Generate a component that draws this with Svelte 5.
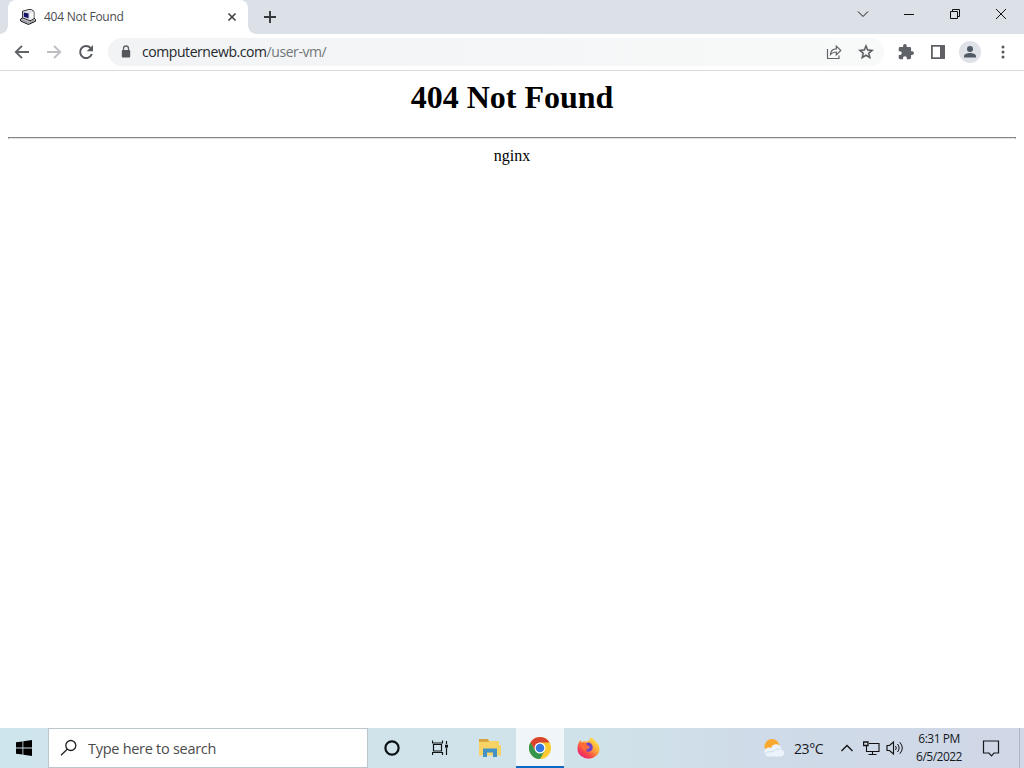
<script>
  const tabTitle = '404 Not Found';
  const host = 'computernewb.com';
  const path = '/user-vm/';
  const time = '6:31 PM';
  const date = '6/5/2022';
</script>

<div class="screen">
  <header class="tabstrip">
    <div class="tab">
      <svg class="favicon" width="16" height="16" viewBox="0 0 16 16">
        <path d="M.6 10 3 8.500l7.500 2.500 3.500-2 1.500 1.500v1.700L8.500 15.500.6 12z" fill="#c4c3cb" stroke="#111" />
        <path d="m2.500 11.200 6 2.500 5.500-2.500" fill="none" stroke="#555" stroke-dasharray="1 1" />
        <path d="M2.500 2.200 8.500.5h3l2.500 2v7l-4 2.300-7.500-3z" fill="#dddce3" stroke="#222" stroke-width=".9" />
        <path d="m9.800 4.200 3.800-1.400v6.500l-3.800 1.900z" fill="#f8f7fa" />
        <path d="m3.800 3.600 4.700 1v4.600L3.800 7.700z" fill="#12126a" />
      </svg>
      <span class="tab-title">{tabTitle}</span>
      <svg class="tab-close" width="16" height="16" viewBox="0 0 16 16">
        <path d="m4.500 4.500 7 7m0-7-7 7" stroke="#3c4043" stroke-width="1.6" />
      </svg>
    </div>
    <svg class="new-tab" width="16" height="16" viewBox="0 0 16 16">
      <path d="M8 2v12M2 8h12" stroke="#34373b" stroke-width="1.9" />
    </svg>
    <div class="window-buttons">
      <svg width="46" height="28" viewBox="0 0 46 28"><path d="m18 11.500 5 5 5-5" /></svg>
      <svg width="46" height="28" viewBox="0 0 46 28"><path d="M18 14.500h10" /></svg>
      <svg width="46" height="28" viewBox="0 0 46 28">
        <path d="M18.500 11.500h7v7h-7zM20.500 11V9.500h7v7H26" />
      </svg>
      <svg width="46" height="28" viewBox="0 0 46 28"><path d="m18 9 10 10m0-10L18 19" /></svg>
    </div>
  </header>

  <div class="toolbar">
    <svg class="nav" width="20" height="20" viewBox="0 0 20 20">
      <path d="M17 10H4m6-6.200L3.800 10l6.200 6.200" fill="none" stroke="#5f6368" stroke-width="1.9" />
    </svg>
    <svg class="nav" width="20" height="20" viewBox="0 0 20 20">
      <path d="M3 10h13m-6-6.200 6.200 6.200-6.200 6.200" fill="none" stroke="#bcbec1" stroke-width="1.9" />
    </svg>
    <svg class="nav" width="20" height="20" viewBox="0 0 20 20">
      <path d="M15.800 12A6 6 0 1 1 14.500 5.900" fill="none" stroke="#56595d" stroke-width="2" />
      <path d="M17 3v6.300h-6.300z" fill="#56595d" />
    </svg>
    <div class="omnibox">
      <svg class="lock" width="10" height="14" viewBox="0 0 10 14">
        <path d="M2.500 6V3.500a2.500 2.500 0 0 1 5 0V6" fill="none" stroke="#5f6368" stroke-width="1.300" />
        <rect x=".8" y="5" width="8.400" height="7.500" rx="1" fill="#54585c" />
      </svg>
      <span class="url">{host}<span class="path">{path}</span></span>
      <svg class="share" width="18" height="18" viewBox="0 0 18 18">
        <path
          d="M2.500 6v9.500h11.500V12.500M5.500 11.500c.3-3.500 2.500-5.500 5.800-5.600V3.200l4.500 4.300-4.500 4.300V9c-2.500 0-4.300.7-5.800 2.500z"
          fill="none" stroke="#5f6368" stroke-width="1.150"
        />
      </svg>
      <svg class="star" width="18" height="18" viewBox="0 0 24 24">
        <path
          d="m22 9.240-7.190-.62L12 2 9.190 8.630 2 9.240l5.460 4.730L5.820 21 12 17.270 18.180 21l-1.630-7.030zM12 15.400l-3.760 2.270 1-4.280-3.320-2.880 4.380-.38L12 6.100l1.710 4.040 4.380.38-3.320 2.880 1 4.280z"
          fill="#54585c" stroke="#54585c" stroke-width=".5"
        />
      </svg>
    </div>
    <svg class="puzzle" width="16" height="16" viewBox="1 1 22 22">
      <path
        d="M20.500 11H19V7a2 2 0 0 0-2-2h-4V3.500a2.500 2.500 0 0 0-5 0V5H4a2 2 0 0 0-2 2v3.800h1.500a2.700 2.700 0 0 1 0 5.400H2V20a2 2 0 0 0 2 2h3.800v-1.500a2.700 2.700 0 0 1 5.400 0V22H17a2 2 0 0 0 2-2v-4h1.500a2.500 2.500 0 0 0 0-5z"
        fill="#5f6368"
      />
    </svg>
    <svg class="panel" width="14" height="14" viewBox="0 0 14 14">
      <path d="M0 0h14v14H0zM1.800 1.800v10.400H9V1.800z" fill="#5f6165" fill-rule="evenodd" />
    </svg>
    <svg class="profile" width="22" height="22" viewBox="0 0 22 22">
      <circle cx="11" cy="11" r="11" fill="#dfe2e7" />
      <circle cx="11" cy="8" r="3" fill="#505a67" />
      <path d="M5 16.500v-1.300c0-2 3.500-3.200 6-3.200s6 1.200 6 3.200v1.300z" fill="#505a67" />
    </svg>
    <svg class="menu" width="4" height="14" viewBox="0 0 4 14">
      <circle cx="2" cy="2" r="1.500" />
      <circle cx="2" cy="7" r="1.500" />
      <circle cx="2" cy="12" r="1.500" />
    </svg>
  </div>

  <main>
    <h1>404 Not Found</h1>
    <hr />
    <p>nginx</p>
  </main>

  <footer class="taskbar">
    <div class="start">
      <svg width="16" height="16" viewBox="0 0 16 16">
        <path d="M0 2.300 6.500 1.400v6.200H0zM7.300 1.300 16 0v7.600H7.300zM0 8.400h6.500v6.200L0 13.700zM7.300 8.400H16V16l-8.700-1.300z" />
      </svg>
    </div>
    <div class="search">
      <svg width="18" height="18" viewBox="0 0 18 18">
        <circle cx="10.800" cy="6.500" r="5" fill="none" stroke="#222" stroke-width="1.300" />
        <path d="m7.200 10.200-6.200 6" stroke="#222" stroke-width="1.300" />
      </svg>
      <span>Type here to search</span>
    </div>
    <div class="app">
      <svg width="16" height="16" viewBox="0 0 16 16">
        <circle cx="8" cy="8" r="6.600" fill="none" stroke="#0b1014" stroke-width="2.200" />
      </svg>
    </div>
    <div class="app">
      <svg width="16" height="16" viewBox="0 0 16 16" fill="none" stroke="#101416" stroke-width="1.200">
        <path d="M.5.500v2.500h10V.5M.5 15v-2.500h10V15M1.500 4.500h8v6.500h-8zM14.500 1v3m0 4v7" />
        <path d="M13 4.700h3v3h-3z" fill="#101416" stroke="none" />
      </svg>
    </div>
    <div class="app files">
      <svg width="22" height="20" viewBox="0 0 22 20">
        <path d="M0 1h9l1.500 2H20v4h2v10.500H0z" fill="#f7d264" />
        <path d="M0 1h9l1 2.700H0z" fill="#d5a13a" />
        <path d="M4 10.500h14V19h-4v-4.500H8V19H4z" fill="#4292c5" />
      </svg>
    </div>
    <div class="app active">
      <svg width="22" height="22" viewBox="0 0 22 22">
        <circle cx="11" cy="11" r="11" fill="#fccb2f" />
        <path d="M1.470 5.500A11 11 0 0 1 20.530 5.500H11L6.240 13.750z" fill="#d9432f" />
        <path d="M1.470 5.500A11 11 0 0 0 11 22l4.760-8.250L11 16l-4.760-2.250z" fill="#35944e" />
        <circle cx="11" cy="11" r="5.500" fill="#fff" />
        <circle cx="11" cy="11" r="4.300" fill="#3478df" />
      </svg>
    </div>
    <div class="app">
      <svg width="23" height="22" viewBox="0 0 22 22">
        <defs>
          <linearGradient id="flame" x1=".85" y1=".1" x2=".2" y2=".9">
            <stop offset="0" stop-color="#ffe24a" />
            <stop offset=".4" stop-color="#ffa63a" />
            <stop offset=".75" stop-color="#fb4a46" />
            <stop offset="1" stop-color="#e92675" />
          </linearGradient>
        </defs>
        <path
          d="M13 .5c2 .8 4 2.200 5 4 2.500 1.700 4 4.200 4 7.500a11 9.700 0 0 1-22 0C0 8 1 5 3 3l1 2c2-.8 4-.8 5.500-.4 1.500-.6 2.700-1.600 3.500-4.100z"
          fill="url(#flame)"
        />
        <path d="M7 9c.5-3 4-4.500 6.500-2.500 2.600 2.100 2.300 6.300-.5 7.700-2.700 1.200-6 0-6.500-2.700l4 .3 2-1.800z" fill="#7542c7" />
        <path d="M2 7c3-2 6-1.500 8 1.500l1.700.5c-.3 1.300-2 1.500-2.700 2-1 .8 0 1.800 1.500 1.800-2 1.700-5 .9-5.500-1.800z" fill="#ff6a38" />
      </svg>
    </div>

    <div class="tray">
      <svg class="weather" width="22" height="20" viewBox="0 0 22 20">
        <circle cx="9" cy="8.500" r="7.500" fill="#f9a92f" />
        <path
          d="M6 18.500a4.500 4.500 0 0 1-.4-9c1-.1 1.800.1 2.400.5C9 7.500 11 6 13.500 6.200c3 .2 4.800 2.600 4.700 5.200 4 .6 4 7.100-.7 7.100z"
          fill="#edf3fa"
        />
        <path d="M2 16c3-4 7-1 9-3 1.500-2 3.500-2.500 6-1.500" fill="none" stroke="#c9dced" />
      </svg>
      <span class="temperature">23°C</span>
      <svg class="chevron" width="14" height="8" viewBox="0 0 14 8">
        <path d="m1.500 7 5.500-5.500L12.500 7" fill="none" stroke="#111" stroke-width="1.300" />
      </svg>
      <svg class="network" width="17" height="15" viewBox="0 0 17 15" fill="none" stroke="#111" stroke-width="1.100">
        <path d="M6 2.500h10v8H3.500V5M9.500 10.500v3M5.500 13.500h8" />
        <path d="M.5 1h4.500v3.500H.5z" stroke-width="1.300" />
      </svg>
      <svg class="volume" width="18" height="16" viewBox="0 0 18 16" fill="none" stroke="#111">
        <path d="M1 5.500h2.500L7.500 2v12l-4-3.500H1z" stroke-width="1.150" />
        <path d="M9.500 6q1.600 2 0 4M11.500 4q3.200 4 0 8M13.800 2.200q5 5.800 0 11.600" />
      </svg>
      <div class="clock">
        <span>{time}</span>
        <span class="date">{date}</span>
      </div>
      <svg class="notifications" width="18" height="17" viewBox="0 0 18 17">
        <path d="M1.500 1h15v12H12l-2.500 2.800L7 13H1.500z" fill="none" stroke="#15181c" stroke-width="1.200" />
      </svg>
      <div class="show-desktop"></div>
    </div>
  </footer>
</div>

<style>
  :global(body) {
    margin: 0;
    overflow: hidden;
  }

  .screen {
    display: flex;
    flex-direction: column;
    width: 1024px;
    height: 768px;
    background: #fff;
    font-family: 'Open Sans', 'Noto Sans', sans-serif;
  }

  svg {
    display: block;
    flex-shrink: 0;
  }

  .tabstrip {
    display: flex;
    flex-shrink: 0;
    height: 34px;
    background: #dce0e7;
  }

  .tab {
    position: relative;
    display: flex;
    align-items: center;
    box-sizing: border-box;
    width: 240px;
    margin-left: 8px;
    padding: 0 8px 0 12px;
    border-radius: 8px 8px 0 0;
    background: #fff;
  }

  /* flared feet of the active tab */
  .tab::before,
  .tab::after {
    content: '';
    position: absolute;
    bottom: 0;
    width: 8px;
    height: 8px;
  }

  .tab::before {
    left: -8px;
    background: radial-gradient(circle at 0 0, transparent 7.5px, #fff 8px);
  }

  .tab::after {
    right: -8px;
    background: radial-gradient(circle at 100% 0, transparent 7.5px, #fff 8px);
  }

  .tab-title {
    flex: 1;
    margin-left: 8px;
    color: #4a4d51;
    font-size: 12px;
    line-height: 16px;
    letter-spacing: -0.24px;
  }

  .new-tab {
    margin: 9px 0 0 14px;
  }

  .window-buttons {
    display: flex;
    margin-left: auto;
  }

  .window-buttons path {
    fill: none;
    stroke: #111;
    stroke-width: 1;
  }

  .toolbar {
    display: flex;
    align-items: center;
    flex-shrink: 0;
    box-sizing: border-box;
    height: 37px;
    padding-left: 12px;
    border-bottom: 1px solid #d8dadd;
  }

  .nav {
    margin-right: 12px;
  }

  .omnibox {
    display: flex;
    align-items: center;
    box-sizing: border-box;
    width: 776px;
    height: 28px;
    padding: 0 9px 0 13px;
    border-radius: 14px;
    background: linear-gradient(90deg, #f1f3f4, #f4f5f6 300px, #f8f9f9);
  }

  .url {
    flex: 1;
    margin-left: 11px;
    color: #25282c;
    font-size: 14px;
    line-height: 20px;
    letter-spacing: -0.43px;
  }

  .path {
    color: #72767a;
  }

  .share {
    margin-right: 14px;
  }

  .puzzle {
    margin-left: 14px;
  }

  .panel {
    margin-left: 17px;
  }

  .profile {
    margin-left: 14px;
  }

  .menu {
    margin-left: 20px;
    fill: #54575b;
  }

  main {
    flex: 1;
    padding: 8px 8px 0;
    color: #000;
    font-family: 'Liberation Serif', serif;
    text-align: center;
  }

  h1 {
    margin: 0 0 21px;
    font-size: 32px;
    line-height: 37px;
  }

  hr {
    margin: 0 0 8px;
    border: 1px solid #858585;
    border-bottom-color: #e3e3e3;
  }

  p {
    margin: 0;
    font-size: 16px;
    line-height: 18px;
  }

  .taskbar {
    display: flex;
    flex-shrink: 0;
    height: 40px;
    background: linear-gradient(90deg, #cfe5ee 0, #d0e2e9 600px, #cfdbe8 760px, #d0d7e6 100%);
  }

  .start,
  .app {
    display: flex;
    align-items: center;
    justify-content: center;
    width: 48px;
  }

  .search {
    display: flex;
    align-items: center;
    box-sizing: border-box;
    width: 320px;
    padding-left: 11px;
    border: 1px solid #bcc5c9;
    background: #fff;
    color: #4b4b4b;
    font-size: 14.5px;
  }

  .search span {
    margin-left: 10px;
    letter-spacing: -0.28px;
  }

  .files {
    width: 52px;
  }

  .active {
    box-sizing: border-box;
    padding-top: 2px;
    border-bottom: 2px solid #0b69c4;
    background: #eff5f9;
  }

  .tray {
    display: flex;
    align-items: center;
    margin-left: auto;
    color: #16191d;
  }

  .temperature {
    width: 38px;
    margin: 0 8px 0 9px;
    font-size: 14px;
    letter-spacing: -0.4px;
  }

  .network {
    margin-left: 9px;
  }

  .volume {
    margin-left: 6px;
  }

  .clock {
    display: flex;
    flex-direction: column;
    align-items: center;
    width: 70px;
    font-size: 12px;
    line-height: 18px;
    letter-spacing: -0.5px;
  }

  .notifications {
    margin-left: 8px;
  }

  .show-desktop {
    width: 4px;
    height: 40px;
    margin-left: 19px;
    border-left: 1px solid #aeb5c1;
  }
</style>
